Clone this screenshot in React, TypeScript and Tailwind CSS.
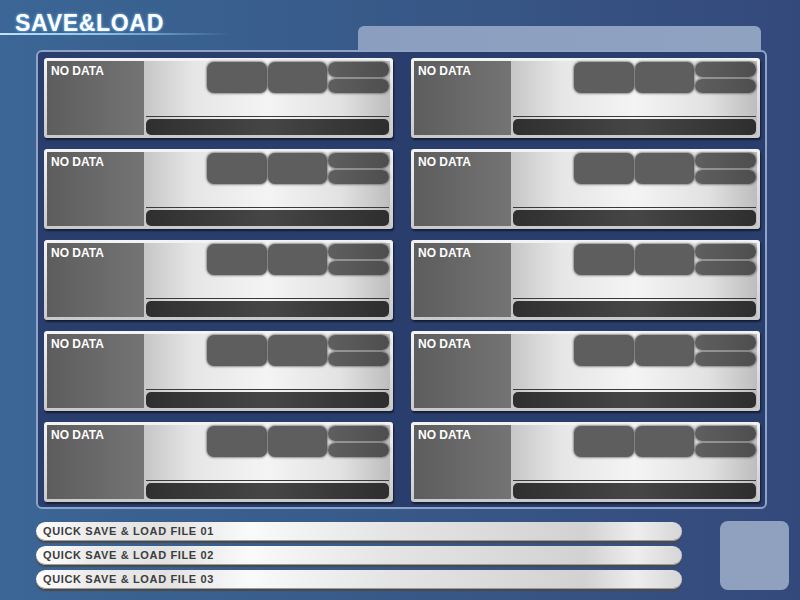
import React from "react";

const slots = Array.from({ length: 10 }, (_, i) => i);
const quickFiles = ["01", "02", "03"];

function SlotCard() {
    return (
        <div className="h-[80px] rounded-[3px] bg-[linear-gradient(180deg,#f4f4f4,#c9c9c9)] p-[3px] shadow-[1px_2px_2px_rgba(0,0,0,0.55)] flex">
            {/* thumbnail */}
            <div className="w-[97px] h-full bg-[linear-gradient(90deg,#5d5d5d,#747474)] px-[4px] pt-[3px] text-[12px] font-bold text-white leading-[14px]">
                NO DATA
            </div>

            {/* info area */}
            <div className="flex-1 flex flex-col bg-[linear-gradient(90deg,#c6c6c6_0%,#e6e6e6_20%,#f4f4f4_50%,#e2e2e2_80%,#bdbdbd_100%)] pl-[2px] pr-[1px]">
                <div className="flex justify-end gap-[1px] h-[31px] mt-[1px]">
                    <div className="w-[60px] rounded-[7px] bg-[#5e5e5e] shadow-[0_0_2px_1px_rgba(80,80,80,0.6)]" />
                    <div className="w-[59px] rounded-[7px] bg-[#5e5e5e] shadow-[0_0_2px_1px_rgba(80,80,80,0.6)]" />
                    <div className="w-[61px] flex flex-col gap-[2px]">
                        <div className="h-[15px] rounded-[7px] bg-[linear-gradient(90deg,#5f5f5f,#4e4e4e)] shadow-[0_0_2px_1px_rgba(80,80,80,0.6)]" />
                        <div className="h-[14px] rounded-[7px] bg-[linear-gradient(90deg,#5f5f5f,#4e4e4e)] shadow-[0_0_2px_1px_rgba(80,80,80,0.6)]" />
                    </div>
                </div>
                <div className="mt-auto h-[1px] bg-[#3a3a3a]" />
                <div className="mt-[2px] h-[16px] rounded-[5px] bg-[linear-gradient(90deg,#2f2f2f,#464646_50%,#2e2e2e)]" />
            </div>
        </div>
    );
}

export default function App() {
    return (
        <div
            className="w-[800px] h-[600px] overflow-hidden flex flex-col bg-[linear-gradient(90deg,#3b6695_0%,#385c8b_40%,#34497b_100%)]"
            style={{ fontFamily: '"Liberation Sans", Arial, sans-serif' }}
        >
            {/* header */}
            <div className="h-[50px] flex items-end">
                <div className="w-[358px] h-full relative">
                    <div className="pl-[15px] pt-[10px] text-[23px] font-bold text-white tracking-[0.7px] leading-[26px] [text-shadow:0_0_3px_#7cc8ff]">
                        SAVE&amp;LOAD
                    </div>
                    <div className="absolute left-0 top-[33px] w-[230px] h-[2px] bg-[linear-gradient(90deg,#bfe4ff_0%,#8cc2ea_45%,rgba(120,170,220,0)_100%)]" />
                </div>
                <div className="w-[403px] h-[25px] rounded-t-[6px] bg-[linear-gradient(90deg,#8b9ec0,#8fa2c0)] -mb-[1px]" />
            </div>

            {/* save slots panel */}
            <div className="ml-[36px] w-[731px] h-[459px] rounded-[6px] border-2 border-[#8ea3c6] bg-[#2a3e6d] pt-[6px] pl-[6px] pr-[5px]">
                <div className="grid grid-cols-2 gap-x-[18px] gap-y-[11px]">
                    {slots.map((i) => (
                        <SlotCard key={i} />
                    ))}
                </div>
            </div>

            {/* quick save */}
            <div className="flex mt-[12px]">
                <div className="ml-[36px] w-[646px] flex flex-col gap-[5px] pt-[1px]">
                    {quickFiles.map((n) => (
                        <div
                            key={n}
                            className="h-[19px] rounded-full bg-[linear-gradient(90deg,#ffffff_0%,#ececec_8%,#e2e2e2_20%,#fafafa_33%,#e4e4e4_55%,#d2d2d2_85%,#eeeeee_93%,#d6d6d6_100%)] shadow-[0_2px_1px_#4a4a4a,inset_0_-1px_0_#9a9a9a] pl-[7px] flex items-center"
                        >
                            <span className="text-[11px] font-bold text-[#3c3c3c] tracking-[0.64px] leading-none">
                                QUICK SAVE &amp; LOAD FILE {n}
                            </span>
                        </div>
                    ))}
                </div>
                <div className="ml-[38px] w-[69px] h-[69px] rounded-[8px] bg-[#8fa1bf]" />
            </div>
        </div>
    );
}
